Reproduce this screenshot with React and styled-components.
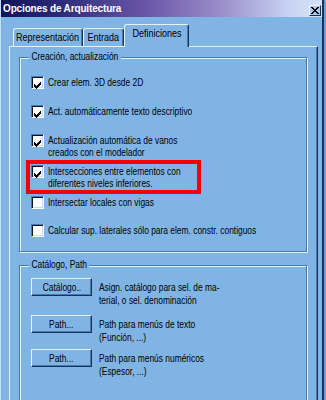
import React from "react";
import styled, { createGlobalStyle } from "styled-components";

const bg = "#80b4e4";
const hi = "#e6f3ff";
const sh = "#4878ac";
const dk = "#1a3258";
const font = `"Liberation Sans", Arial, sans-serif`;

const Global = createGlobalStyle`
  html, body {
    margin: 0;
    padding: 0;
    background: #6c9fd2;
  }
`;

const Frame = styled.div`
  box-sizing: border-box;
  width: 324px;
  height: 400px;
  overflow: hidden;
  background: ${bg};
  border-left: 1px solid #c4ddf6;
  border-right: 2px solid ${dk};
  font-family: ${font};
  font-size: 10.5px;
  color: #000;
  display: flex;
  flex-direction: column;
`;

// the dialog text is narrow, so glyphs are squeezed horizontally
const Squeeze = styled.span`
  display: inline-block;
  flex: none;
  white-space: nowrap;
  transform: scaleX(${(p) => p.$k || 0.8});
  transform-origin: ${(p) => p.$o || "left"} center;
`;

const TitleBar = styled.div`
  height: 17px;
  flex: none;
  display: flex;
  align-items: center;
  justify-content: space-between;
  padding: 0 1px 0 2px;
  background: linear-gradient(to right, #12125a 0%, #2c2a78 18%, #6a56a8 45%, #9a8cc8 68%, #c8d4f4 90%, #d6e2fa 100%);
`;

const Title = styled.span`
  color: #fff;
  font-weight: bold;
  font-size: 10px;
  letter-spacing: -0.15px;
`;

const CloseBtn = styled.div`
  box-sizing: border-box;
  width: 12px;
  height: 11px;
  margin-top: 3px;
  background: #a6c8ec;
  border: 1px solid;
  border-color: #eef6ff ${dk} ${dk} #eef6ff;
  display: flex;
  align-items: center;
  justify-content: center;
`;

const Body = styled.div`
  flex: 1;
  display: flex;
  flex-direction: column;
  padding: 7px 4px 0 8px;
`;

const TabStrip = styled.div`
  display: flex;
  align-items: flex-end;
  padding-left: 4px;
  height: 22px;
  position: relative;
  z-index: 1;
`;

const Tab = styled.div`
  box-sizing: border-box;
  width: ${(p) => p.$w}px;
  height: ${(p) => (p.$active ? 23 : 18)}px;
  margin-bottom: ${(p) => (p.$active ? -1 : 0)}px;
  padding-top: 2px;
  border: 1px solid ${hi};
  border-bottom: none;
  border-right-color: ${dk};
  border-radius: 3px 3px 0 0;
  box-shadow: inset -1px 0 0 ${sh};
  background: ${bg};
  display: flex;
  justify-content: center;
  align-items: flex-start;
  line-height: 12px;
  font-size: 11px;
`;

const Panel = styled.div`
  flex: 1;
  border-top: 1px solid ${hi};
  border-left: 1px solid ${hi};
  border-right: 1px solid ${dk};
  box-shadow: inset -1px 0 0 ${sh};
  padding: 10px 10px 0 9px;
  display: flex;
  flex-direction: column;
`;

const Group = styled.div`
  position: relative;
  margin-top: ${(p) => p.$mt || 0}px;
  border: 1px solid ${sh};
  box-shadow: inset 1px 1px 0 ${hi}, 1px 1px 0 ${hi};
  padding: ${(p) => p.$pad};
  display: flex;
  flex-direction: column;
`;

const Legend = styled.span`
  position: absolute;
  top: -8px;
  left: 9px;
  padding: 0 3px;
  background: ${bg};
  line-height: 13px;
  white-space: nowrap;
  transform: scaleX(0.8);
  transform-origin: left center;
`;

const CheckRow = styled.div`
  display: flex;
  align-items: flex-start;
  gap: 4px;
  margin-top: ${(p) => p.$mt || 0}px;
  width: ${(p) => (p.$w ? `${p.$w}px` : "auto")};
  outline: ${(p) => (p.$marked ? "4px solid #f00000" : "none")};
  outline-offset: 1px;
`;

const Box = styled.div`
  box-sizing: border-box;
  flex: none;
  width: 13px;
  height: 13px;
  background: #fff;
  border: 1px solid;
  border-color: ${sh} #fff #fff ${sh};
  box-shadow: inset 1px 1px 0 #0a1626, inset -1px -1px 0 #c8dcf0;
  padding: 2px;
`;

const Label = styled.div`
  line-height: 12px;
  white-space: nowrap;
  transform: scaleX(0.8);
  transform-origin: left center;
`;

const ButtonRow = styled.div`
  display: flex;
  align-items: flex-start;
  gap: 7px;
  margin-top: ${(p) => p.$mt || 0}px;
`;

const Button = styled.div`
  box-sizing: border-box;
  flex: none;
  width: 61px;
  height: 18px;
  background: ${bg};
  border: 1px solid;
  border-color: ${hi} ${dk} ${dk} ${hi};
  box-shadow: inset -1px -1px 0 ${sh};
  display: flex;
  align-items: center;
  justify-content: center;
  line-height: 12px;
`;

const Desc = styled.div`
  margin-top: 3px;
  line-height: 13px;
  white-space: nowrap;
  transform: scaleX(0.8);
  transform-origin: left center;
`;

const Check = ({ on }) => (
  <Box>
    {on && (
      <svg width="7" height="7" viewBox="0 0 7 7" shapeRendering="crispEdges">
        <path d="M0 2h1v3H0zM1 3h1v3H1zM2 4h1v3H2zM3 3h1v3H3zM4 2h1v3H4zM5 1h1v3H5zM6 0h1v3H6z" fill="#000" />
      </svg>
    )}
  </Box>
);

const options = [
  { text: ["Crear elem. 3D desde 2D"], on: true, mt: 0 },
  { text: ["Act. automáticamente texto descriptivo"], on: true, mt: 16 },
  { text: ["Actualización automática de vanos", "creados con el modelador"], on: true, mt: 16 },
  { text: ["Intersecciones entre elementos con", "diferentes niveles inferiores."], on: true, mt: 7, marked: true },
  { text: ["Intersectar locales con vigas"], on: false, mt: 7 },
  { text: ["Calcular sup. laterales sólo para elem. constr. contiguos"], on: false, mt: 15 },
];

const paths = [
  { btn: "Catálogo..", text: ["Asign. catálogo para sel. de ma-", "terial, o sel. denominación"], mt: 0 },
  { btn: "Path...", text: ["Path para menús de texto", "(Función, ...)"], mt: 8 },
  { btn: "Path...", text: ["Path para menús numéricos", "(Espesor, ...)"], mt: 5 },
];

export default function App() {
  return (
    <>
      <Global />
      <Frame>
        <TitleBar>
          <Title>Opciones de Arquitectura</Title>
          <CloseBtn>
            <svg width="8" height="7" viewBox="0 0 8 7" shapeRendering="crispEdges">
              <path d="M0 0h2v1H0zM6 0h2v1H6zM1 1h2v1H1zM5 1h2v1H5zM2 2h4v1H2zM3 3h2v1H3zM2 4h4v1H2zM1 5h2v1H1zM5 5h2v1H5zM0 6h2v1H0zM6 6h2v1H6z" fill="#000" />
            </svg>
          </CloseBtn>
        </TitleBar>
        <Body>
          <TabStrip>
            <Tab $w={70}><Squeeze $k={0.82} $o="center">Representación</Squeeze></Tab>
            <Tab $w={41}><Squeeze $k={0.82} $o="center">Entrada</Squeeze></Tab>
            <Tab $w={65} $active><Squeeze $k={0.82} $o="center">Definiciones</Squeeze></Tab>
          </TabStrip>
          <Panel>
            <Group $pad="18px 0 14px 11px">
              <Legend>Creación, actualización</Legend>
              {options.map((o, i) => (
                <CheckRow key={i} $mt={o.mt} $marked={o.marked} $w={o.marked ? 165 : 0}>
                  <Check on={o.on} />
                  <Label>
                    {o.text.map((t, j) => (
                      <div key={j}>{t}</div>
                    ))}
                  </Label>
                </CheckRow>
              ))}
            </Group>
            <Group $mt={13} $pad="12px 0 40px 11px">
              <Legend>Catálogo, Path</Legend>
              {paths.map((p, i) => (
                <ButtonRow key={i} $mt={p.mt}>
                  <Button><Squeeze $o="center">{p.btn}</Squeeze></Button>
                  <Desc>
                    {p.text.map((t, j) => (
                      <div key={j}>{t}</div>
                    ))}
                  </Desc>
                </ButtonRow>
              ))}
            </Group>
          </Panel>
        </Body>
      </Frame>
    </>
  );
}
